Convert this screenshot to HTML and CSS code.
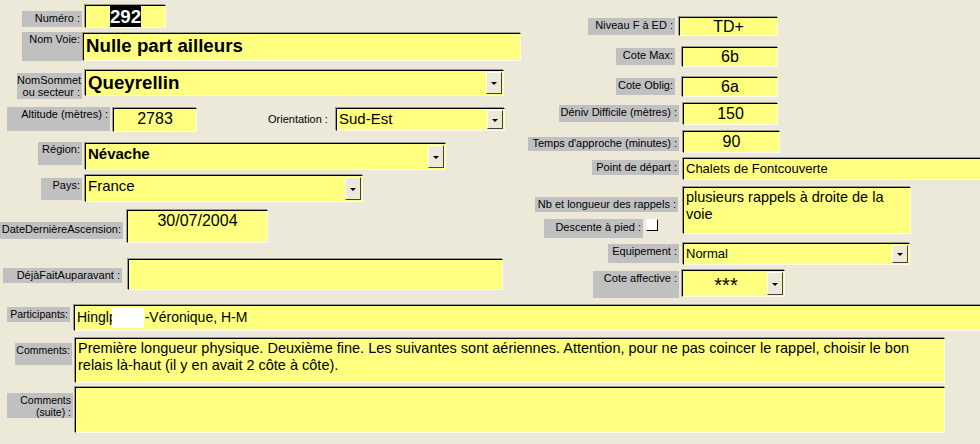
FILE: index.html
```html
<!DOCTYPE html>
<html lang="fr">
<head>
    <meta charset="UTF-8">
    <title>Fiche Voie</title>
    <link rel="stylesheet" href="styles.css">
</head>
<body>
<div class="form">
    <div class="top">
        <!-- Colonne gauche -->
        <div class="col-left">
            <div class="row r1">
                <div class="lbl lbl-numero">Numéro :</div>
                <div class="fld fld-numero"><span class="sel">292</span></div>
            </div>
            <div class="row r2">
                <div class="lbl lbl-nomvoie">Nom Voie:</div>
                <div class="fld big fld-nomvoie">Nulle part ailleurs</div>
            </div>
            <div class="row r3">
                <div class="lbl lbl-sommet">NomSommet<br>ou secteur :</div>
                <div class="fld big combo fld-sommet"><span class="val">Queyrellin</span><span class="drop"></span></div>
            </div>
            <div class="row r4">
                <div class="lbl lbl-alt">Altitude (mètres) :</div>
                <div class="fld num fld-alt">2783</div>
                <div class="plain lbl-orient">Orientation :</div>
                <div class="fld combo fld-orient"><span class="val">Sud-Est</span><span class="drop"></span></div>
            </div>
            <div class="row r5">
                <div class="lbl lbl-region">Région:</div>
                <div class="fld combo fld-region"><span class="val">Névache</span><span class="drop"></span></div>
            </div>
            <div class="row r6">
                <div class="lbl lbl-pays">Pays:</div>
                <div class="fld combo fld-pays"><span class="val">France</span><span class="drop"></span></div>
            </div>
            <div class="row r7">
                <div class="lbl lbl-date">DateDernièreAscension:</div>
                <div class="fld num fld-date">30/07/2004</div>
            </div>
            <div class="row r8">
                <div class="lbl lbl-deja">DéjàFaitAuparavant :</div>
                <div class="fld fld-deja"></div>
            </div>
        </div>

        <!-- Colonne droite -->
        <div class="col-right">
            <div class="row q1">
                <div class="lbl lbl-niveau">Niveau F à ED :</div>
                <div class="fld num fld-niveau">TD+</div>
            </div>
            <div class="row q2">
                <div class="lbl lbl-cote">Cote Max:</div>
                <div class="fld num fld-cote">6b</div>
            </div>
            <div class="row q3">
                <div class="lbl lbl-cote">Cote Oblig:</div>
                <div class="fld num fld-cote">6a</div>
            </div>
            <div class="row q4">
                <div class="lbl lbl-deniv">Déniv Difficile (mètres) :</div>
                <div class="fld num fld-deniv">150</div>
            </div>
            <div class="row q5">
                <div class="lbl lbl-temps">Temps d'approche (minutes) :</div>
                <div class="fld num fld-temps">90</div>
            </div>
            <div class="row q6">
                <div class="lbl lbl-depart">Point de départ :</div>
                <div class="fld fld-depart">Chalets de Fontcouverte</div>
            </div>
            <div class="row q7">
                <div class="q7-labels">
                    <div class="lbl lbl-rappels">Nb et longueur des rappels :</div>
                    <div class="descente">
                        <div class="lbl lbl-descente">Descente à pied :</div>
                        <span class="check"></span>
                    </div>
                </div>
                <div class="fld multi fld-rappels">plusieurs rappels à droite de la voie</div>
            </div>
            <div class="row q8">
                <div class="lbl lbl-equip">Equipement :</div>
                <div class="fld combo fld-equip"><span class="val">Normal</span><span class="drop"></span></div>
            </div>
            <div class="row q9">
                <div class="lbl lbl-affect">Cote affective :</div>
                <div class="fld combo fld-affect"><span class="val stars">***</span><span class="drop"></span></div>
            </div>
        </div>
    </div>

    <!-- Bas du formulaire -->
    <div class="bottom">
        <div class="row b1">
            <div class="lbl small lbl-part">Participants:</div>
            <div class="fld fld-part">Hinglp<span class="mask"></span>-Véronique, H-M</div>
        </div>
        <div class="row b2">
            <div class="lbl small lbl-comm">Comments:</div>
            <div class="fld multi fld-comm">Première longueur physique. Deuxième fine. Les suivantes sont aériennes. Attention, pour ne pas coincer le rappel, choisir le bon relais là&#8209;haut (il y en avait 2 côte à côte).</div>
        </div>
        <div class="row b3">
            <div class="lbl small lbl-suite">Comments<br>(suite) :</div>
            <div class="fld multi fld-suite"></div>
        </div>
    </div>
</div>
</body>
</html>
```

FILE: styles.css
```css
body {
    margin: 0;
    background: #ece9d8;
    font-family: "Liberation Sans", Arial, sans-serif;
    color: #000;
}
.form {
    width: 980px;
    height: 444px;
    overflow: hidden;
}
.top {
    display: flex;
    height: 305px;
}
.col-left {
    width: 520px;
    padding-top: 5px;
}
.col-right {
    width: 460px;
    padding-top: 17px;
}
.row {
    display: flex;
    align-items: flex-start;
}

/* étiquettes */
.lbl {
    box-sizing: border-box;
    flex: none;
    background: #c0c0c0;
    font-size: 11px;
    line-height: 13px;
    text-align: right;
    padding: 1px 2px 0 0;
    white-space: nowrap;
}
.lbl.small {
    font-size: 10.5px;
}
.plain {
    flex: none;
    font-size: 11px;
    line-height: 13px;
}

/* champs */
.fld {
    box-sizing: border-box;
    flex: none;
    background: #ffff80;
    border-top: 1px solid #000;
    border-left: 1px solid #000;
    border-right: 1px solid #fbfbee;
    border-bottom: 1px solid #fbfbee;
    box-shadow: -1px -1px 0 #9d9a8c;
    font-size: 15px;
    line-height: 18px;
    padding: 1px 2px;
    white-space: nowrap;
    overflow: hidden;
}
.fld.big {
    font-size: 18.7px;
    font-weight: bold;
    line-height: 22px;
}
.fld.num {
    text-align: center;
    font-size: 16px;
}
.fld.multi {
    white-space: normal;
}
.combo {
    display: flex;
    padding: 1px 1px 1px 2px;
}
.combo .val {
    flex: 1;
    overflow: hidden;
}
.drop {
    flex: none;
    width: 16px;
    box-sizing: border-box;
    background: #ece9d8;
    border-top: 1px solid #fff;
    border-left: 1px solid #fff;
    border-right: 1px solid #404040;
    border-bottom: 1px solid #404040;
    position: relative;
}
.drop::after {
    content: "";
    position: absolute;
    left: 4px;
    top: 50%;
    margin-top: -1px;
    border-left: 3px solid transparent;
    border-right: 3px solid transparent;
    border-top: 3px solid #000;
}
.sel {
    background: #000;
    color: #fff;
    display: inline-block;
    line-height: 21px;
}

/* colonne gauche */
.r1 { height: 27px; }
.lbl-numero { margin: 6px 0 0 22px; width: 60px; height: 16px; }
.fld-numero { margin-left: 3px; width: 81px; height: 23px; padding: 0; text-align: center; font-size: 18.7px; font-weight: bold; }

.r2 { height: 38px; }
.lbl-nomvoie { margin-left: 22px; width: 60px; height: 29px; }
.fld-nomvoie { margin: 1px 0 0 1px; width: 438px; height: 28px; }

.r3 { height: 37px; }
.lbl-sommet { margin: 3px 0 0 17px; width: 65px; height: 26px; line-height: 12px; }
.fld-sommet { margin-left: 3px; width: 419px; height: 26px; }

.r4 { height: 35px; }
.lbl-alt { margin-left: 7px; width: 103px; height: 24px; }
.fld-alt { margin: 1px 0 0 3px; width: 84px; height: 24px; }
.lbl-orient { margin: 6px 0 0 71px; width: 68px; }
.fld-orient { margin-top: 1px; width: 169px; height: 23px; }

.r5 { height: 33px; }
.lbl-region { margin-left: 38px; width: 44px; height: 23px; }
.fld-region { margin: 1px 0 0 3px; width: 361px; height: 27px; font-weight: bold; }

.r6 { height: 35px; }
.lbl-pays { margin: 3px 0 0 41px; width: 41px; height: 22px; }
.fld-pays { margin-left: 3px; width: 278px; height: 27px; }

.r7 { height: 49px; }
.lbl-date { margin-top: 12px; width: 123px; height: 17px; }
.fld-date { margin-left: 4px; width: 141px; height: 33px; }

.lbl-deja { margin: 9px 0 0 3px; width: 119px; height: 15px; }
.fld-deja { margin-left: 6px; width: 375px; height: 31px; }

/* colonne droite */
.q1 { height: 30px; }
.lbl-niveau { margin: 1px 0 0 68px; width: 87px; height: 17px; }
.fld-niveau { margin-left: 4px; width: 99px; height: 19px; padding: 0; }

.q2 { height: 30px; }
.q3 { height: 26px; }
.lbl-cote { margin: 1px 0 0 96px; width: 59px; height: 17px; }
.fld-cote { margin-left: 7px; width: 96px; height: 20px; padding: 0; }

.q4 { height: 28px; }
.lbl-deniv { margin: 2px 0 0 39px; width: 120px; height: 17px; }
.fld-deniv { margin-left: 4px; width: 95px; height: 22px; }

.q5 { height: 27px; }
.lbl-temps { margin: 6px 0 0 8px; width: 151px; height: 14px; padding-top: 0; }
.fld-temps { margin-left: 4px; width: 97px; height: 22px; }

.q6 { height: 29px; }
.lbl-depart { margin: 2px 0 0 72px; width: 87px; height: 15px; }
.fld-depart { margin-left: 4px; width: 300px; height: 22px; font-size: 13px; }

.q7 { height: 56px; }
.q7-labels { width: 163px; flex: none; }
.lbl-rappels { margin: 10px 0 0 15px; width: 143px; height: 15px; }
.descente { display: flex; align-items: flex-start; margin: 7px 0 0 24px; }
.lbl-descente { width: 99px; height: 19px; padding-top: 2px; }
.check {
    flex: none;
    width: 12px;
    height: 12px;
    margin-left: 3px;
    box-sizing: border-box;
    background: #fff;
    border-left: 1px solid #fff;
    border-top: 1px solid #fff;
    border-right: 1px solid #000;
    border-bottom: 1px solid #000;
}
.fld-rappels { width: 228px; height: 47px; font-size: 14.5px; line-height: 17px; }

.q8 { height: 27px; }
.lbl-equip { margin: 1px 0 0 88px; width: 71px; height: 19px; }
.fld-equip { margin-left: 4px; width: 227px; height: 22px; font-size: 13px; }

.lbl-affect { margin: 1px 0 0 73px; width: 86px; height: 27px; }
.fld-affect { margin-left: 3px; width: 103px; height: 27px; }
.stars { text-align: center; font-size: 20px; line-height: 26px; }

/* bas */
.b1 { height: 33px; }
.lbl-part { margin: 2px 0 0 7px; width: 63px; height: 15px; }
.fld-part { margin-left: 4px; width: 920px; height: 26px; font-size: 14px; line-height: 20px; padding-left: 2px; }
.mask {
    display: inline-block;
    width: 32px;
    height: 21px;
    margin: 0 1px 0 -5px;
    background: #fff;
    vertical-align: top;
}

.b2 { height: 49px; }
.lbl-comm { margin: 5px 0 0 15px; width: 57px; height: 22px; }
.fld-comm { margin-left: 3px; width: 870px; height: 45px; font-size: 14.5px; line-height: 17px; }

.lbl-suite { margin: 6px 0 0 7px; width: 66px; height: 25px; line-height: 12px; }
.fld-suite { margin-left: 2px; width: 870px; height: 46px; }
```
